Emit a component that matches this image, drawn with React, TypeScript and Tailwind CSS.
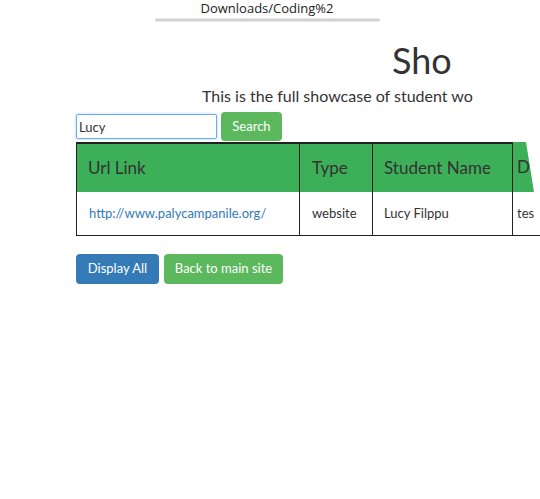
import React from "react";

export default function App() {
  const font = { fontFamily: "Lato, 'Open Sans', sans-serif" };
  return (
    <div className="w-[540px] h-[499px] bg-white overflow-hidden relative text-[#333]" style={font}>
      {/* top curled tab */}
      <div className="flex flex-col items-center pt-0">
        <div className="w-[230px] ml-[-6px] h-[17px] flex justify-center">
          <span className="text-[13px] leading-[17px] text-[#222] font-['Open_Sans',sans-serif] whitespace-nowrap">
            Downloads/Coding%2
          </span>
        </div>
        <div className="w-[225px] ml-[-6px] h-[4px] mt-[1px] bg-gradient-to-b from-[#f4f4f4] via-[#c8c8c8] to-[#f0f0f0] rounded-full" />
      </div>

      {/* title */}
      <div className="pl-[392px] mt-[19px] h-[38px]">
        <h1 className="text-[36px] leading-[38px] text-[#333] whitespace-nowrap font-normal">Sho</h1>
      </div>
      <div className="pl-[202px] mt-[7px]">
        <p className="text-[16px] leading-[20px] whitespace-nowrap">This is the full showcase of student wo</p>
      </div>

      {/* search */}
      <div className="flex items-center pl-[76px] mt-[6px] gap-[4px]">
        <input
          defaultValue="Lucy"
          className="w-[141px] h-[25px] border border-[#66afe9] rounded-[2px] px-[2px] text-[13px] text-[#333] outline-none shadow-[0_0_3px_rgba(102,175,233,0.6)]"
          style={font}
        />
        <button className="w-[61px] h-[29px] bg-[#5cb85c] text-white text-[13px] rounded-[4px]">Search</button>
      </div>

      {/* table */}
      <div className="pl-[76px] mt-[1px] relative">
        <div className="relative w-[464px]">
          <div className="flex h-[50px]">
            <div className="w-[223px] bg-[#3caf58] border-t-2 border-l border-[#222] flex items-center pl-[11px] text-[17px]">Url Link</div>
            <div className="w-[73px] bg-[#3caf58] border-t-2 border-l border-[#222] flex items-center pl-[12px] text-[17px]">Type</div>
            <div className="w-[140px] bg-[#3caf58] border-t-2 border-l border-[#222] flex items-center pl-[11px] text-[17px] whitespace-nowrap">Student Name</div>
            <div className="relative w-[28px] border-l border-[#222] flex items-center pl-[4px] text-[17px] overflow-hidden">
              <svg className="absolute left-0 top-0" width="28" height="50">
                <polygon points="0,0 13,0 21,50 0,50" fill="#3caf58" />
              </svg>
              <span className="relative">D</span>
            </div>
          </div>
          <div className="flex h-[44px] border-b border-[#222]">
            <div className="w-[223px] border-l border-[#222] flex items-center pl-[12px] text-[13px] text-[#337ab7]">http://www.palycampanile.org/</div>
            <div className="w-[73px] border-l border-[#222] flex items-center pl-[12px] text-[13px]">website</div>
            <div className="w-[140px] border-l border-[#222] flex items-center pl-[11px] text-[13px]">Lucy Filppu</div>
            <div className="w-[28px] border-l border-[#222] flex items-center pl-[4px] text-[13px]">tes</div>
          </div>
        </div>
      </div>

      {/* buttons */}
      <div className="flex pl-[76px] mt-[18px] gap-[5px]">
        <button className="w-[83px] h-[30px] bg-[#337ab7] text-white text-[13px] rounded-[4px]">Display All</button>
        <button className="w-[119px] h-[30px] bg-[#5cb85c] text-white text-[13px] rounded-[4px]">Back to main site</button>
      </div>
    </div>
  );
}
